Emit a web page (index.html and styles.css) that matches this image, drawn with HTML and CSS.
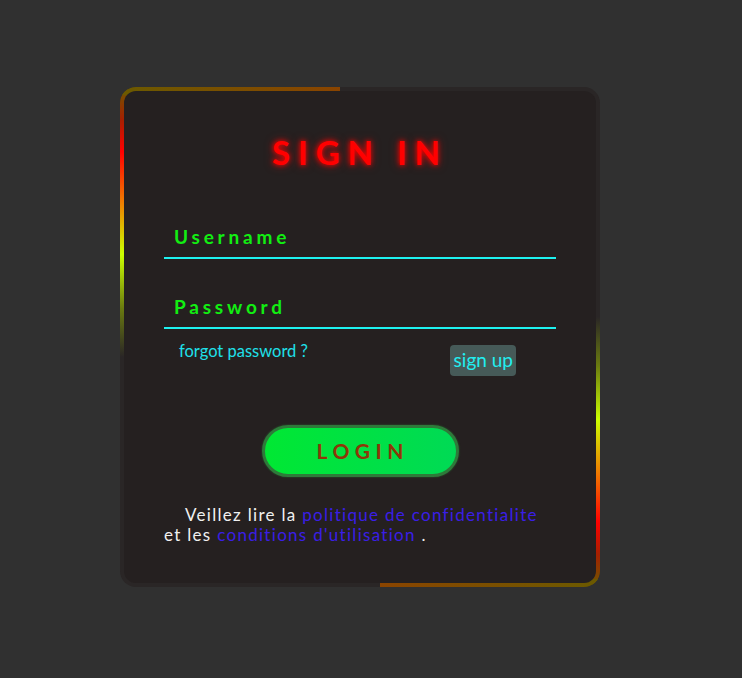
FILE: index.html
```html
<!DOCTYPE html>
<html lang="fr">
<head>
<meta charset="utf-8">
<title>Sign in</title>
<link rel="stylesheet" href="styles.css">
</head>
<body>
<div class="box">
  <span class="glow glow-tl"></span>
  <span class="glow glow-br"></span>
  <form class="form">
    <h2 class="title">SIGN IN</h2>
    <div class="field"><span class="label">Username</span></div>
    <div class="field"><span class="label">Password</span></div>
    <div class="links">
      <a class="forgot">forgot password ?</a>
      <a class="signup">sign up</a>
    </div>
    <div class="actions">
      <button type="button" class="login">LOGIN</button>
    </div>
    <p class="legal">Veillez lire la <a class="blue">politique de confidentialite</a> et les <a class="blue">conditions d'utilisation</a> .</p>
  </form>
</div>
</body>
</html>
```

FILE: styles.css
```css
* { box-sizing: border-box; }
html, body { margin: 0; }
body {
  background: #303030;
  font-family: Lato, "Open Sans", sans-serif;
  padding: 87px 0 0 120px;
  min-height: 678px;
}
.box {
  position: relative;
  width: 480px;
  height: 500px;
  background: #2a2626;
  border-radius: 16px;
  overflow: hidden;
}
.glow {
  position: absolute;
  width: 220px;
  height: 270px;
}
.glow-tl {
  top: 0;
  left: 0;
  background:
    linear-gradient(90deg, #6b5a00, #8a4400) top left / 100% 8px no-repeat,
    linear-gradient(180deg, #6b5a00 0%, #a52000 12%, #ff0000 24%, #f07800 42%, #ccff00 62%, #6a7a10 82%, rgba(60,60,20,0) 100%) top left / 8px 100% no-repeat;
}
.glow-br {
  bottom: 0;
  right: 0;
  background:
    linear-gradient(270deg, #6b5a00, #8a4400) bottom right / 100% 8px no-repeat,
    linear-gradient(0deg, #6b5a00 0%, #a52000 12%, #ff0000 24%, #f07800 42%, #ccff00 62%, #6a7a10 82%, rgba(60,60,20,0) 100%) bottom right / 8px 100% no-repeat;
}
.form {
  position: absolute;
  inset: 4px;
  background: #252020;
  border-radius: 12px;
  padding: 38px 40px 0;
  display: flex;
  flex-direction: column;
}
.title {
  margin: 0 0 48px;
  text-align: center;
  color: #ff0000;
  font-size: 33px;
  font-weight: 700;
  letter-spacing: 0.24em;
  line-height: 46px;
  padding-left: 0;
  text-shadow: 0 0 5px #ff0000, 0 0 10px rgba(255, 0, 0, 0.6);
}
.field {
  border-bottom: 2px solid #1ef2f0;
  padding: 0 10px 9px;
  height: 36px;
  display: flex;
  align-items: flex-end;
  margin-bottom: 34px;
}
.field + .field { margin-bottom: 0; }
.label {
  color: #12ee12;
  font-size: 19px;
  font-weight: 700;
  letter-spacing: 0.2em;
  line-height: 22px;
}
.links {
  display: flex;
  justify-content: space-between;
  align-items: flex-start;
  padding: 12px 40px 0 15px;
}
.forgot {
  color: #1fe0ea;
  font-size: 16.5px;
  line-height: 20px;
}
.signup {
  margin-top: 4px;
  background: #465a58;
  color: #22eef0;
  font-size: 19px;
  line-height: 23px;
  padding: 3px 3px 5px 4px;
  border-radius: 4px;
}
.actions {
  display: flex;
  justify-content: center;
  padding-top: 49px;
}
.login {
  width: 197px;
  height: 52px;
  border-radius: 26px;
  border: 3px solid #2e7a3a;
  background: linear-gradient(90deg, #00e833, #00da55);
  color: #8e3608;
  font-family: Lato, sans-serif;
  font-size: 21px;
  font-weight: 700;
  letter-spacing: 0.26em;
  padding: 0 0 2px 0.26em;
  box-shadow: 0 0 2px rgba(40, 120, 50, 0.8);
}
.legal {
  margin: 28px 0 0;
  color: #f0f0f0;
  font-size: 17px;
  line-height: 20px;
  letter-spacing: 1.3px;
  text-indent: 21px;
}
.blue { color: #3a1ee6; }
```
